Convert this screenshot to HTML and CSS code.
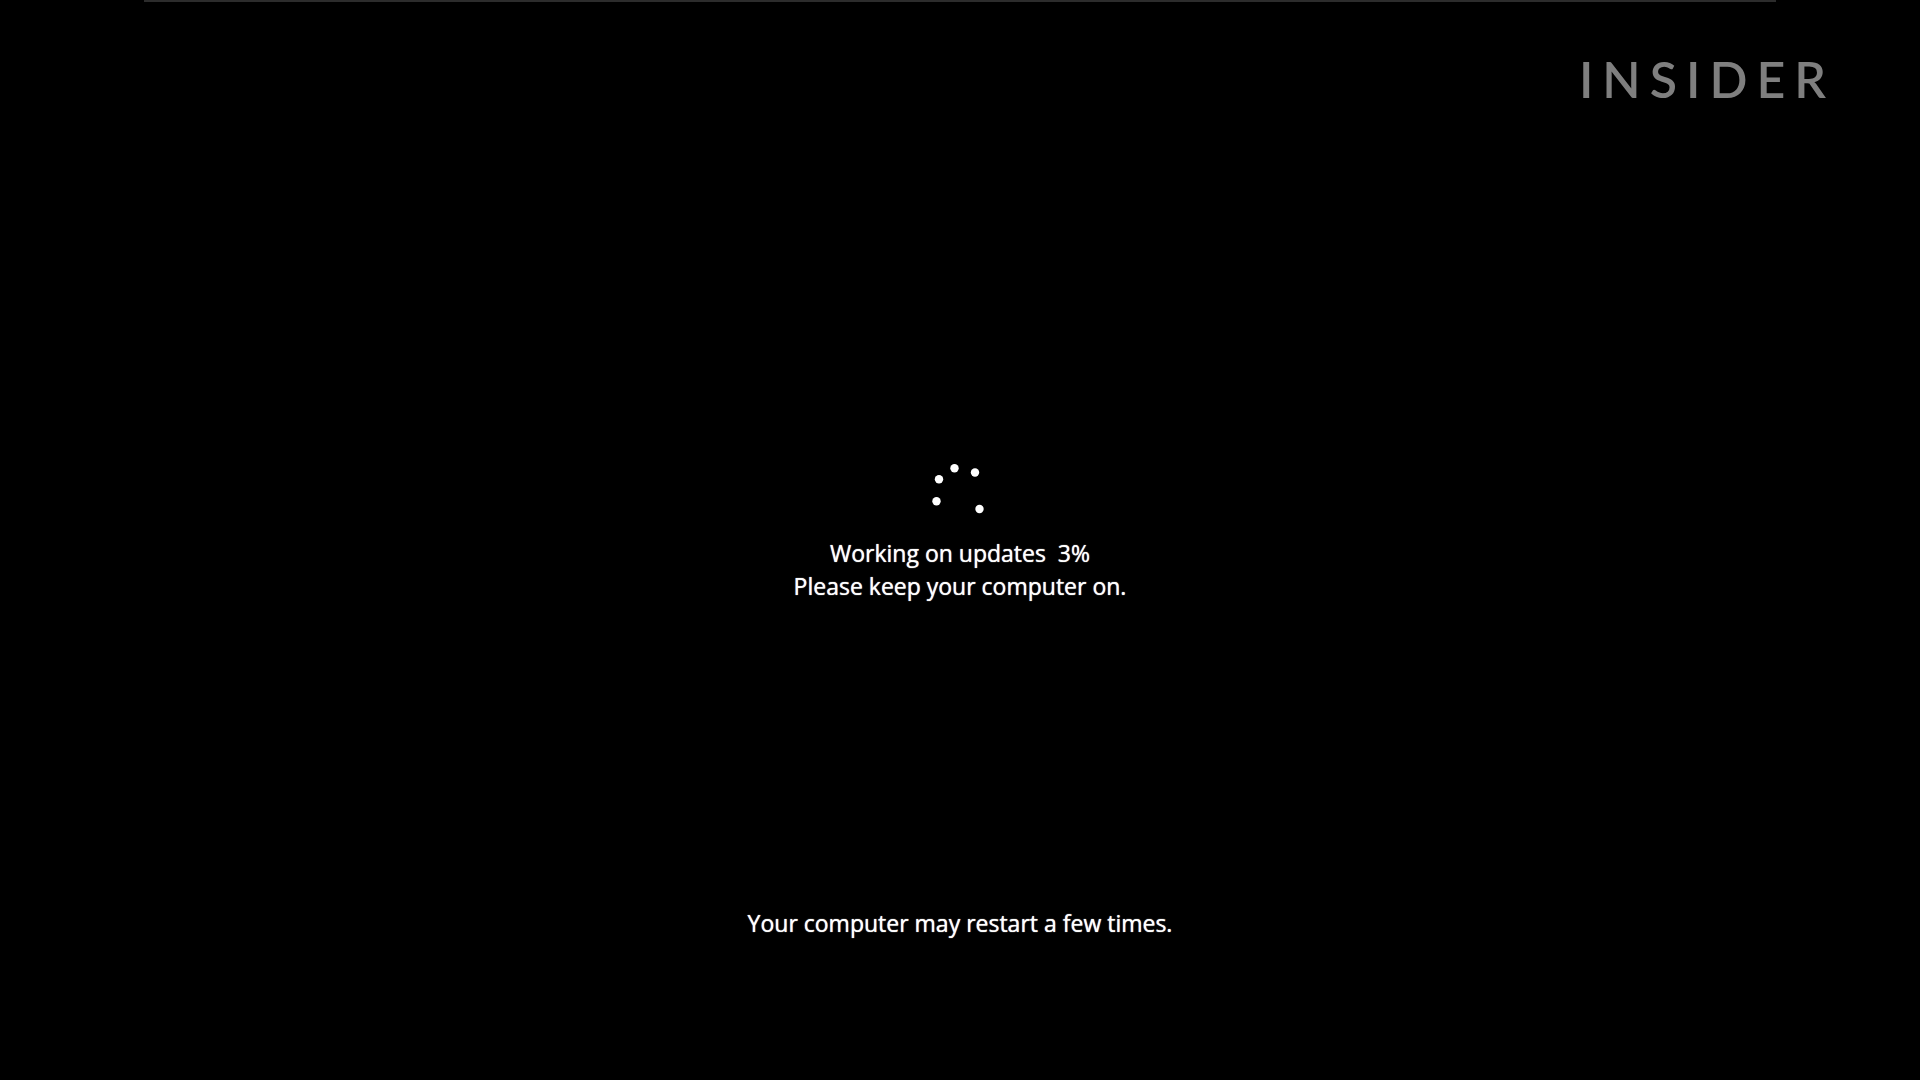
FILE: index.html
```html
<!DOCTYPE html>
<html lang="en">
<head>
<meta charset="utf-8">
<title>Working on updates</title>
<link rel="stylesheet" href="styles.css">
</head>
<body>
<div class="screen">
  <div class="edge"></div>
  <header class="brand">INSIDER</header>
  <main class="status">
    <svg class="spinner" viewBox="0 0 60 60" role="img" aria-label="Loading">
      <circle cx="49.5" cy="49" r="4.2"/>
      <circle cx="45" cy="12.5" r="4.2"/>
      <circle cx="24.5" cy="8.3" r="4.2"/>
      <circle cx="9" cy="19.3" r="4.2"/>
      <circle cx="6.5" cy="41.2" r="4.2"/>
    </svg>
    <p class="message">Working on updates&nbsp; 3%</p>
    <p class="message">Please keep your computer on.</p>
  </main>
  <footer class="note">
    <p class="message">Your computer may restart a few times.</p>
  </footer>
</div>
</body>
</html>
```
FILE: styles.css
```css
* {
  box-sizing: border-box;
}

body {
  margin: 0;
  background: #000;
  color: #fff;
  font-family: "Open Sans", "Noto Sans", sans-serif;
}

.screen {
  display: flex;
  flex-direction: column;
  min-height: 100vh;
}

.edge {
  height: 2px;
  margin: 0 7.5%;
  background: #2c2c2c;
}

.brand {
  padding: 47px 85px 0 0;
  color: #7f7f7f;
  font-family: Lato, sans-serif;
  font-size: 50px;
  font-weight: 600;
  line-height: 60px;
  letter-spacing: 9px;
  text-align: right;
}

.status {
  display: flex;
  flex: 1;
  flex-direction: column;
  align-items: center;
  padding-top: 351px;
}

.spinner {
  width: 60px;
  height: 60px;
  margin-bottom: 17px;
  fill: #fff;
}

.message {
  margin: 0;
  font-size: 23px;
  font-weight: 500;
  line-height: 33px;
  text-shadow: 0 0 1px #fff;
}

.note {
  padding-bottom: 140px;
  text-align: center;
}
```
